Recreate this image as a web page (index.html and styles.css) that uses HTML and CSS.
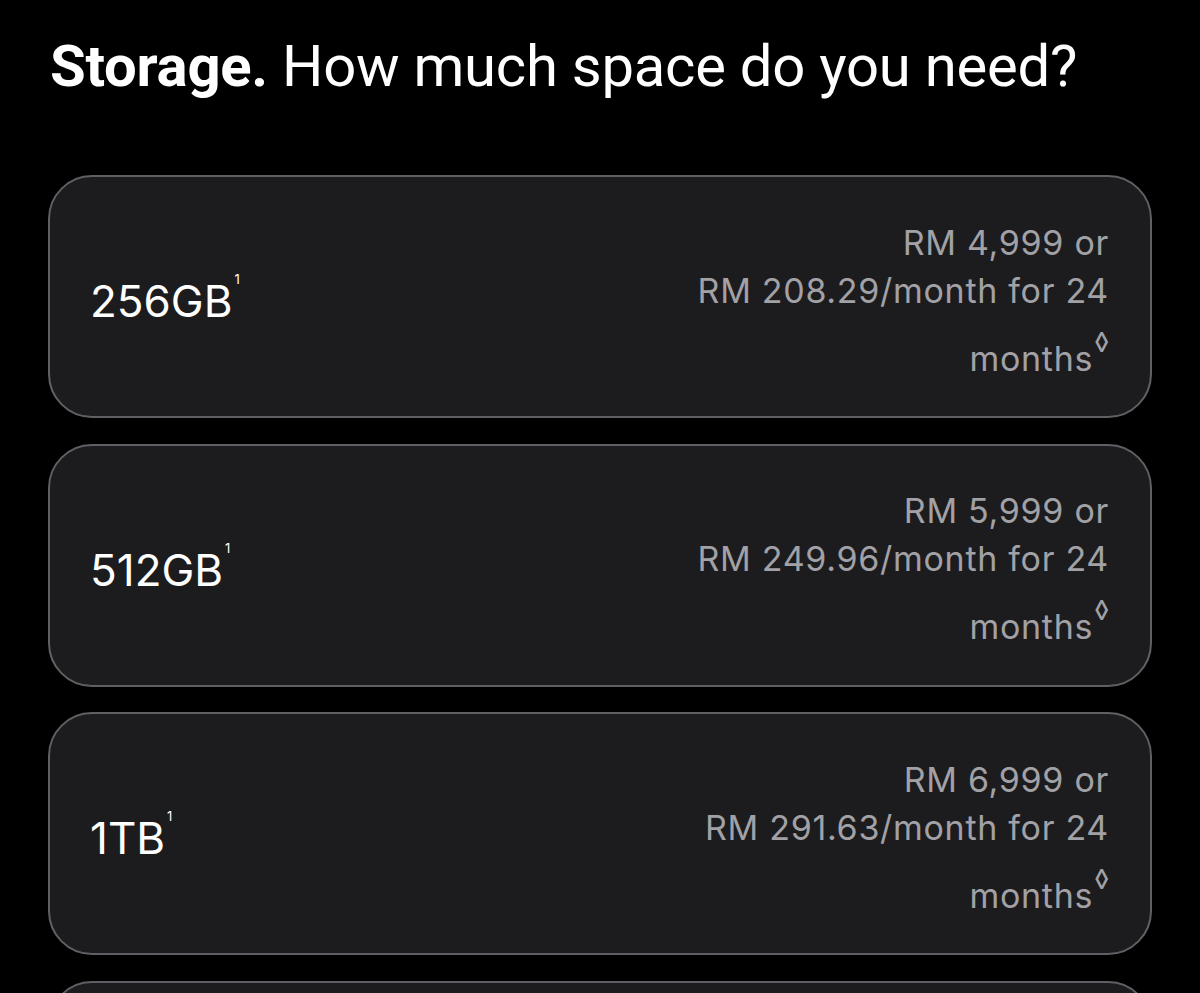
FILE: index.html
```html
<!DOCTYPE html>
<html lang="en">
<head>
    <meta charset="UTF-8">
    <meta name="viewport" content="width=device-width, initial-scale=1.0">
    <title>Storage</title>
    <link rel="stylesheet" href="styles.css">
</head>
<body>

    <div class="page">
        <h2 class="title"><b>Storage.</b> How much space do you need?</h2>

        <div class="options">

            <div class="option">
                <p class="size">256GB<sup>1</sup></p>
                <p class="price">RM 4,999 or<br>RM 208.29/month for 24<span class="last">months<sup>&#9674;</sup></span></p>
            </div>

            <div class="option">
                <p class="size">512GB<sup>1</sup></p>
                <p class="price">RM 5,999 or<br>RM 249.96/month for 24<span class="last">months<sup>&#9674;</sup></span></p>
            </div>

            <div class="option">
                <p class="size">1TB<sup>1</sup></p>
                <p class="price">RM 6,999 or<br>RM 291.63/month for 24<span class="last">months<sup>&#9674;</sup></span></p>
            </div>

            <div class="option">
                <p class="size">2TB<sup>1</sup></p>
                <p class="price">RM 8,999 or<br>RM 374.96/month for 24<span class="last">months<sup>&#9674;</sup></span></p>
            </div>

        </div>
    </div>

</body>
</html>
```

FILE: styles.css
```css
*{
    margin: 0;
    padding: 0;
    box-sizing: border-box;
    font-family: Inter, "Liberation Sans", Arial, sans-serif;
}
body{
    background-color: #000;
    color: #f5f5f7;
    overflow: hidden;
}
.page{
    padding: 31px 48px 0 48px;
}
.title{
    font-family: Roboto, "Liberation Sans", sans-serif;
    font-size: 58px;
    font-weight: 400;
    line-height: 70px;
    padding-left: 2px;
    letter-spacing: -0.25px;
    white-space: nowrap;
    color: #fff;
}
.title b{
    font-family: inherit;
    font-weight: 700;
}
.options{
    display: flex;
    flex-direction: column;
    gap: 25.5px;
    margin-top: 74px;
}
.option{
    display: flex;
    justify-content: space-between;
    align-items: center;
    flex-shrink: 0;
    height: 243px;
    padding: 0 41px 0 40px;
    background-color: #1c1c1e;
    border: 2px solid #606064;
    border-radius: 44px;
}
.size{
    font-size: 44px;
    color: #fff;
    padding-top: 6px;
}
.size sup{
    font-size: 13px;
    vertical-align: 33px;
    margin-left: 2px;
}
.price{
    text-align: right;
    font-size: 34px;
    line-height: 48px;
    letter-spacing: 0.7px;
    color: #a1a1a6;
    padding-top: 8px;
}
.price .last{
    display: block;
    margin-top: 14px;
}
.price sup{
    font-size: 27px;
    line-height: 1;
    vertical-align: 19px;
    margin-left: 1px;
    letter-spacing: 0;
}
```
